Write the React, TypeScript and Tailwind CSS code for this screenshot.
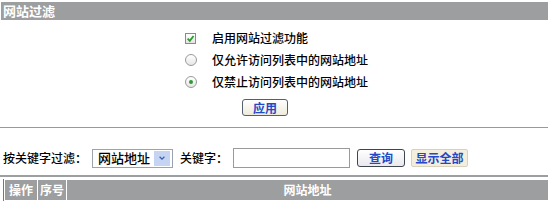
export default function App() {
  return (
    <div className="w-[548px] h-[205px] overflow-hidden bg-white pt-[2px] font-['Noto_Sans_CJK_SC','Liberation_Sans',sans-serif] text-[12px] text-black">
      {/* section title */}
      <div className="ml-[1px] h-[18px] bg-[#9c9ea0] pl-[2px] text-[13px] font-bold leading-[18px] text-white">
        网站过滤
      </div>

      {/* options */}
      <div className="flex flex-col pl-[185px] pt-[7px]">
        <label className="flex h-[22px] items-center gap-[16px] font-medium">
          <span className="flex h-[11px] w-[11px] items-center justify-center border border-[#8a8a8a] bg-gradient-to-b from-white to-[#e4e4e4]">
            <svg viewBox="0 0 10 10" className="h-[9px] w-[9px]">
              <path d="M1.8 5.2 L4.2 7.6 L8.4 2.2" fill="none" stroke="#2f9a2f" strokeWidth="2" />
            </svg>
          </span>
          启用网站过滤功能
        </label>
        <label className="flex h-[22px] items-center gap-[15px] font-medium">
          <span className="h-[12px] w-[12px] rounded-full border border-[#9a9a9a] bg-gradient-to-b from-white to-[#e6e6e6]" />
          仅允许访问列表中的网站地址
        </label>
        <label className="flex h-[22px] items-center gap-[15px] font-medium">
          <span className="flex h-[12px] w-[12px] items-center justify-center rounded-full border border-[#9a9a9a] bg-gradient-to-b from-white to-[#e6e6e6]">
            <span className="h-[4px] w-[4px] rounded-full bg-[#2f9a2f]" />
          </span>
          仅禁止访问列表中的网站地址
        </label>
        <button className="ml-[57px] mt-[6px] h-[17px] w-[46px] rounded-[3px] border border-[#55606e] bg-gradient-to-b from-white to-[#efeadb] text-[12px] font-bold leading-[15px] text-[#2348c8]">
          应用
        </button>
      </div>

      <div className="mt-[11px] h-px bg-[#999]" />

      {/* keyword filter */}
      <div className="mt-[20px] flex h-[20px] items-center pl-[3px] font-medium">
        <span>按关键字过滤：</span>
        <div className="ml-[5px] flex h-[19px] w-[81px] items-center border border-[#9aa3b0] bg-white pl-[5px] text-[13px]">
          <span className="flex-1">网站地址</span>
          <span className="mr-[2px] flex h-[15px] w-[16px] items-center justify-center bg-[#c5d4f2]">
            <svg viewBox="0 0 10 10" className="h-[8px] w-[8px]">
              <path d="M2 3.5 L5 6.5 L8 3.5" fill="none" stroke="#3d5fa8" strokeWidth="1.6" />
            </svg>
          </span>
        </div>
        <span className="ml-[7px]">关键字：</span>
        <input className="ml-[5px] h-[20px] w-[117px] border border-[#9a9a9a] bg-white outline-none" />
        <button className="ml-[7px] h-[18px] w-[48px] rounded-[3px] border border-[#3e4652] bg-gradient-to-b from-white to-[#e9e9ee] text-[12px] font-bold leading-[16px] text-[#2348c8]">
          查询
        </button>
        <button className="ml-[6px] h-[18px] w-[57px] rounded-[2px] border border-[#d8d2bd] bg-[#f4efdd] text-[12px] font-bold leading-[16px] text-[#2348c8]">
          显示全部
        </button>
      </div>

      {/* list table header */}
      <div className="mt-[7px] border-t-[2px] border-[#9c9ea0] pt-[2px]">
        <div className="ml-[3px] flex h-[22px] gap-[1px] border-l border-[#777] pl-[1px] pt-[1px] text-[12px] font-bold text-white">
          <div className="flex h-[20px] w-[32px] items-center justify-center bg-[#9c9ea0]">操作</div>
          <div className="flex h-[20px] w-[28px] items-center justify-center bg-[#9c9ea0]">序号</div>
          <div className="flex h-[20px] flex-1 items-center justify-center bg-[#9c9ea0]">网站地址</div>
        </div>
      </div>
    </div>
  );
}
